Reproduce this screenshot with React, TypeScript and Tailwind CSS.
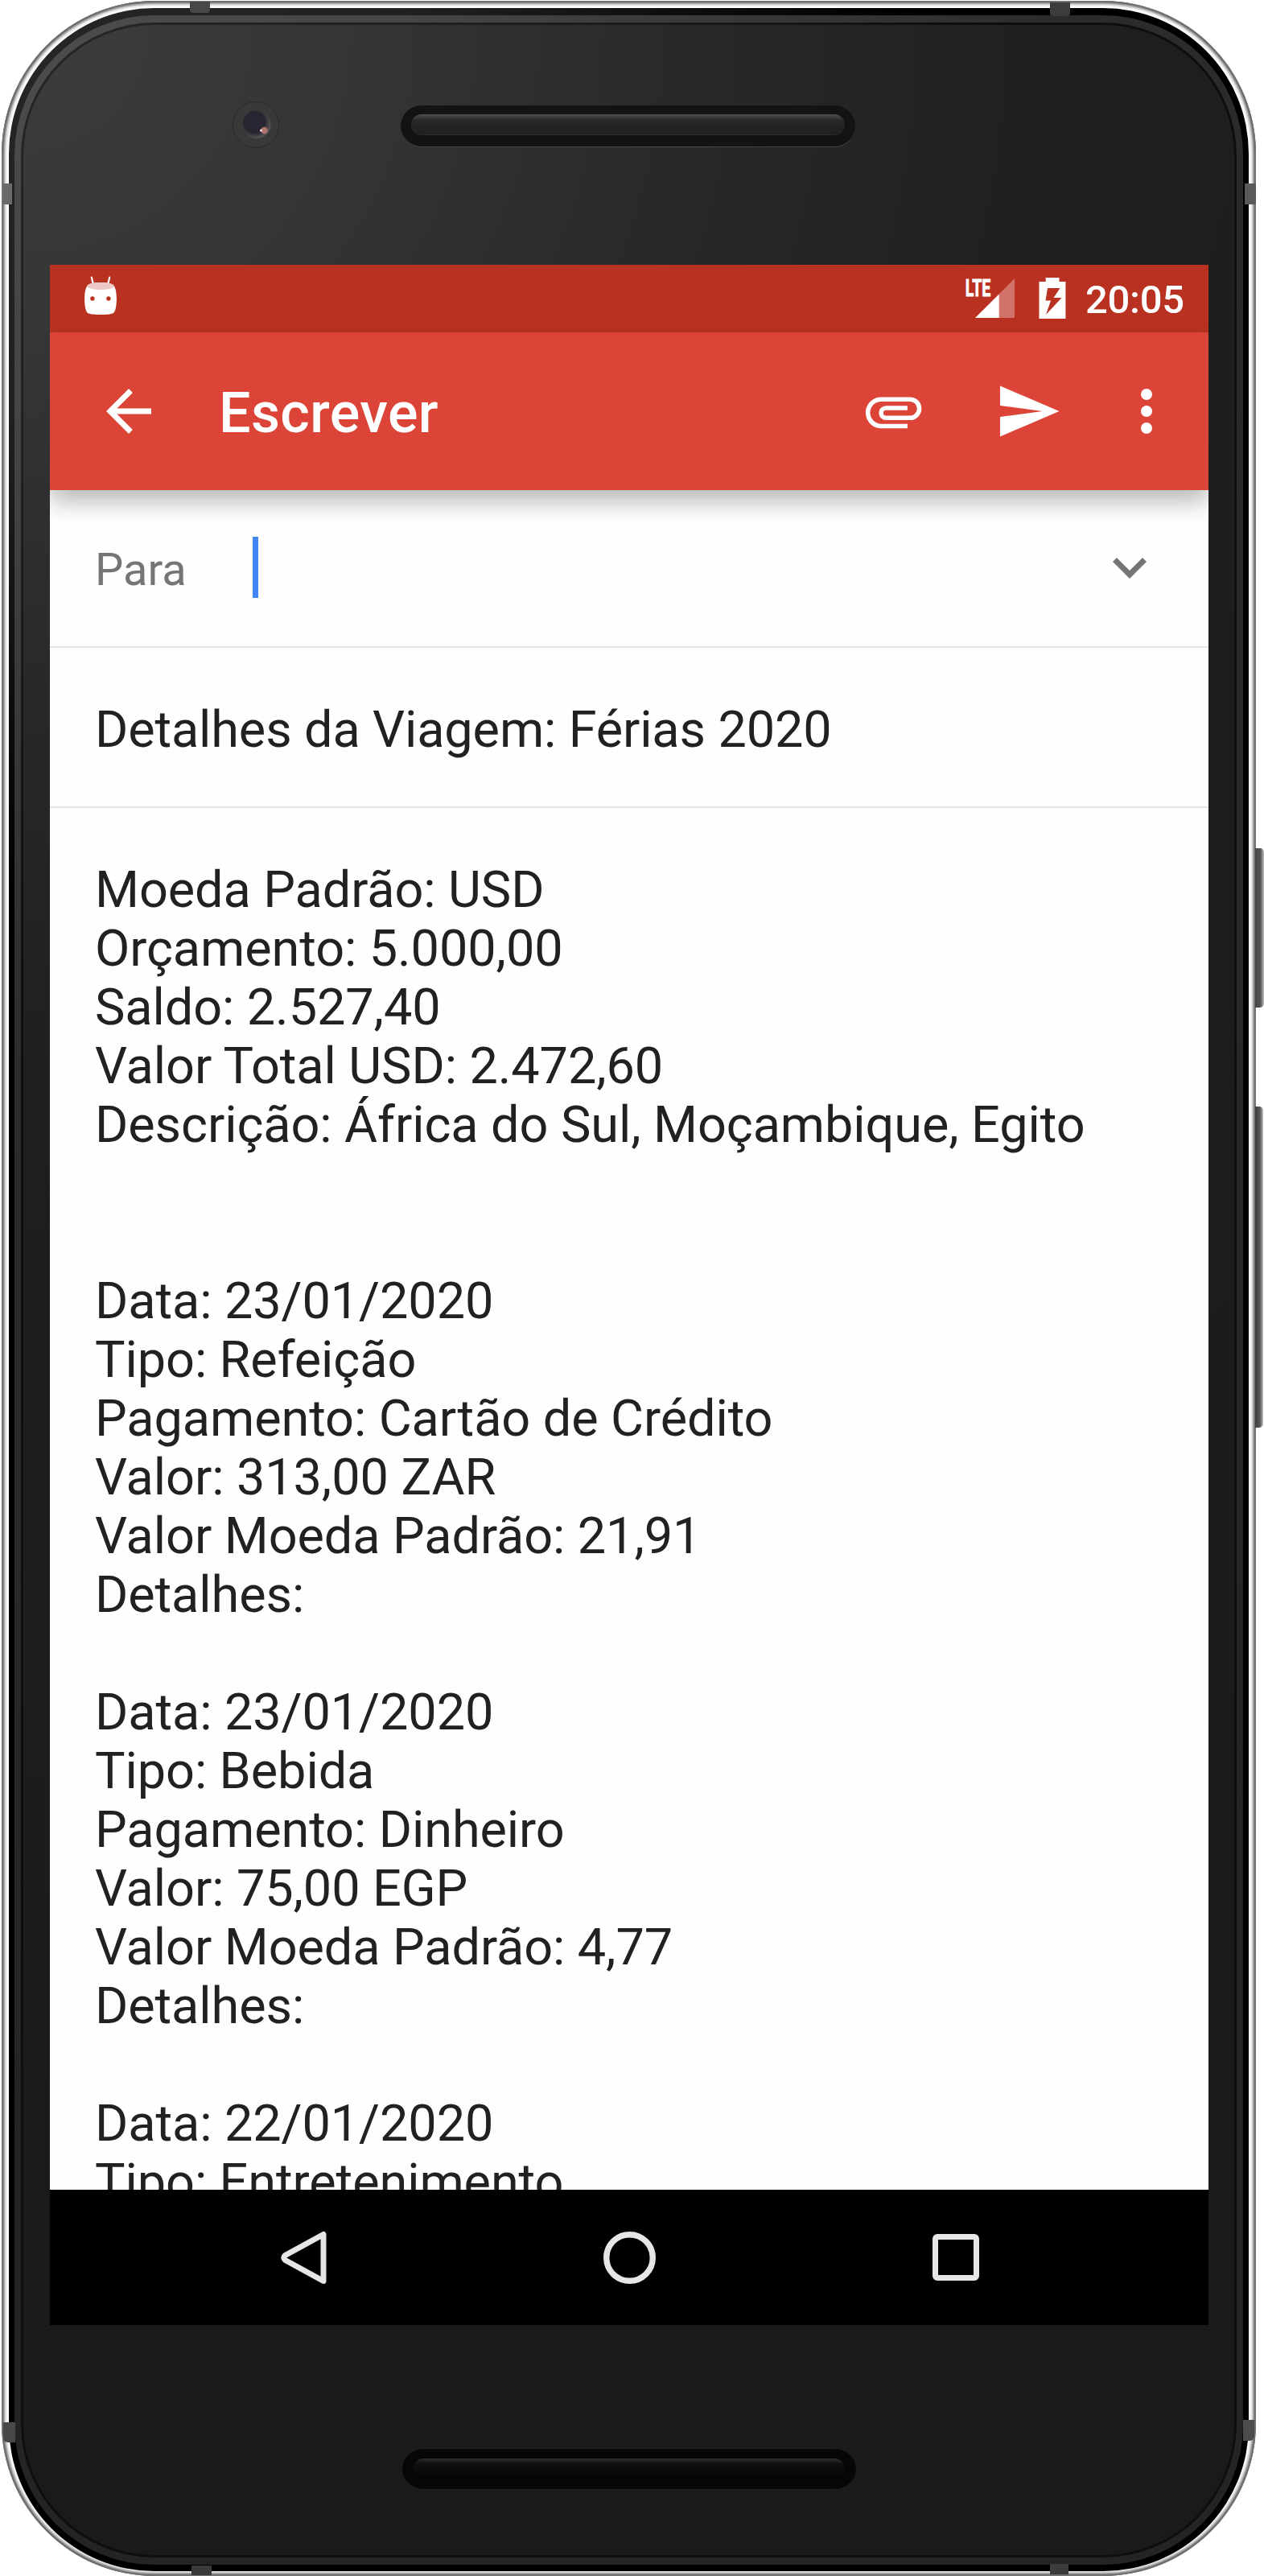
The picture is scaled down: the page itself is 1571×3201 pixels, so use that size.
import React from "react";

const bodyLines = [
  "Moeda Padrão: USD",
  "Orçamento: 5.000,00",
  "Saldo: 2.527,40",
  "Valor Total USD: 2.472,60",
  "Descrição: África do Sul, Moçambique, Egito",
  "",
  "",
  "Data: 23/01/2020",
  "Tipo: Refeição",
  "Pagamento: Cartão de Crédito",
  "Valor: 313,00 ZAR",
  "Valor Moeda Padrão: 21,91",
  "Detalhes:",
  "",
  "Data: 23/01/2020",
  "Tipo: Bebida",
  "Pagamento: Dinheiro",
  "Valor: 75,00 EGP",
  "Valor Moeda Padrão: 4,77",
  "Detalhes:",
  "",
  "Data: 22/01/2020",
  "Tipo: Entretenimento",
];

function StatusBar() {
  return (
    <div className="flex h-[84px] shrink-0 items-start bg-[#b93221] text-white">
      <svg className="ml-[43px] mt-[14px] h-12 w-10" viewBox="0 0 40 48">
        <path d="M8.8 1.5 11 11M31.2 1.5 29 11" stroke="#fff" strokeWidth="2.2" strokeLinecap="round" />
        <path
          d="M3.2 12.5C5 6.5 35 6.5 36.8 12.5 41 18 41 40 36.5 45.5 33 49 7 49 3.5 45.5-1 40-1 18 3.2 12.5Z"
          fill="#fff"
        />
        <ellipse cx="20" cy="12.6" rx="16.6" ry="4.6" fill="#edc9c5" />
        <circle cx="9.9" cy="28" r="2.7" fill="#b93221" />
        <circle cx="29.9" cy="28" r="2.7" fill="#b93221" />
      </svg>
      <div className="ml-auto flex items-start">
        <svg className="mt-[16px] h-[52px] w-[64px] overflow-visible" viewBox="0 0 64 52">
          <path d="M62 1V50H42V21Z" fill="#d07267" />
          <path d="M42.7 20.5V50H13Z" fill="#fff" />
          <text
            x="0.8"
            y="23"
            fill="#fff"
            stroke="#fff"
            strokeWidth="0.8"
            fontFamily="Roboto"
            fontWeight="700"
            fontSize="29"
            textLength="31.5"
            lengthAdjust="spacingAndGlyphs"
          >
            LTE
          </text>
        </svg>
        <svg className="ml-[28px] mt-[16px] h-[52px] w-[34px]" viewBox="0 0 34 52">
          <path
            fill="#fff"
            fillRule="evenodd"
            d="M8.7 0H25.5V5H33.4V51H.5V5H8.7ZM11 13 8.5 28.5H15L9 46 28.5 25H18.5L26.5 13Z"
          />
        </svg>
        <div className="ml-6 mr-[27px] mt-[15px] w-[126px] whitespace-nowrap text-[49px] font-medium leading-[57px] tracking-[-0.3px]">
          20:05
        </div>
      </div>
    </div>
  );
}

function AppBar() {
  return (
    <div className="relative z-10 flex h-[196px] shrink-0 items-center bg-[#db4437] pl-[56px] pr-[35px] text-white shadow-[0_14px_28px_rgba(0,0,0,0.28)]">
      <svg className="size-[84px]" viewBox="0 0 24 24" fill="currentColor">
        <path d="M20 11H7.83l5.59-5.59L12 4l-8 8 8 8 1.41-1.41L7.83 13H20v-2z" />
      </svg>
      <h1 className="ml-[70px] mt-1 text-[70px] font-medium leading-[82px] tracking-[0.4px]">Escrever</h1>
      <svg className="ml-auto size-[84px]" viewBox="0 0 24 24" fill="none" stroke="currentColor" strokeWidth="1.6">
        <path d="M17.1 17.27H7.5A4.76 4.76 0 0 1 7.5 7.77H18a3.25 3.25 0 0 1 0 6.6H9.5a1.75 1.75 0 0 1 0-3.5H17.1" />
      </svg>
      <svg className="ml-[84px] size-[84px]" viewBox="0 0 24 24" fill="currentColor">
        <path d="M2 21 23 12 2 3v7l15 2-15 2z" />
      </svg>
      <svg className="ml-[63px] size-[84px]" viewBox="0 0 24 24" fill="currentColor">
        <circle cx="12" cy="6" r="2" />
        <circle cx="12" cy="12" r="2" />
        <circle cx="12" cy="18" r="2" />
      </svg>
    </div>
  );
}

function NavBar() {
  return (
    <div className="flex h-[168px] shrink-0 items-center bg-black pl-[277px]">
      <svg className="size-[80px]" viewBox="0 0 80 80" fill="none" stroke="#e6e6e6" strokeWidth="7" strokeLinejoin="round">
        <path d="M63 11.5V69.5L15.5 43.5Q12 40.5 15.5 37.5Z" />
      </svg>
      <svg className="ml-[330px] size-[66px]" viewBox="0 0 66 66" fill="none" stroke="#e6e6e6" strokeWidth="7.4">
        <circle cx="33.5" cy="33.5" r="28.8" />
      </svg>
      <div className="ml-[344px] size-[58px] rounded-[6px] border-[7px] border-[#e6e6e6]" />
    </div>
  );
}

function Screen() {
  return (
    <div className="flex h-[2560px] w-[1440px] flex-col overflow-hidden bg-[#fefefe] text-[#212121]">
      <StatusBar />
      <AppBar />
      <div className="flex h-[196px] shrink-0 items-start border-b-2 border-[#e5e5e5] px-[56px]">
        <label className="mt-[66px] w-[196px] text-[56px] leading-[66px] text-[#757575]">Para</label>
        <div className="mt-[58px] h-[76px] w-[7px] bg-[#4285f4]" />
        <svg className="ml-auto mt-[54px] size-[84px]" viewBox="0 0 24 24" fill="#757575">
          <path d="M16.59 8.59 12 13.17 7.41 8.59 6 10l6 6 6-6z" />
        </svg>
      </div>
      <div className="h-[199px] shrink-0 border-b-2 border-[#e5e5e5] px-[56px] pt-[65px] text-[63px] leading-[73px] tracking-[-0.13px]">
        Detalhes da Viagem: Férias 2020
      </div>
      <div className="min-h-0 flex-1 overflow-hidden whitespace-pre px-[56px] pt-[65px] text-[63px] leading-[73px] tracking-[-0.08px]">
        {bodyLines.map((line, i) => (
          <p key={i} className="h-[73px]">
            {line}
          </p>
        ))}
      </div>
      <NavBar />
    </div>
  );
}

const bands = [
  "left-[236px] top-[2px] w-[25px] h-[14px] rounded-b bg-[#474747]",
  "left-[1305px] top-[3px] w-[25px] h-[17px] rounded-b bg-[#3c3c3c]",
  "left-[3px] top-[228px] w-[12px] h-[26px] bg-[#6a6a6a]",
  "left-[1547px] top-[228px] w-[14px] h-[26px] bg-[#5a5a5a]",
  "left-[238px] top-[3188px] w-[25px] h-[12px] bg-[#3a3a3a]",
  "left-[1305px] top-[3186px] w-[23px] h-[13px] bg-[#3c3c3c]",
  "left-[4px] top-[3010px] w-[15px] h-[25px] bg-[#484848] rounded-bl-md",
  "left-[1545px] top-[3007px] w-[14px] h-[26px] bg-[#4c4c4c] rounded-br-md",
];

export default function App() {
  return (
    <div className="relative h-[3201px] w-[1571px] overflow-hidden bg-white font-[Roboto,sans-serif]">
      <div className="absolute left-[1560px] top-[1054px] h-[198px] w-[11px] rounded-r-[5px] bg-linear-to-r from-[#444] via-[#555] via-60% to-[#c4c4c4]" />
      <div className="absolute left-[1560px] top-[1375px] h-[399px] w-[10px] rounded-r-[5px] bg-linear-to-r from-[#3c3c3c] via-[#585858] via-60% to-[#c4c4c4]" />

      <div className="ml-[2px] mt-px flex h-[3200px] w-[1559px] flex-col rounded-[190px] bg-white px-[9px] pb-[6px] pt-[9px] shadow-[inset_0_0_0_1px_#777,inset_0_0_4px_3px_#3c3c3c]">
        <div className="flex-1 rounded-[181px] bg-[radial-gradient(circle_at_0_0,#262626_0,#202020_500px,#000_1100px)] px-[7px] pb-[8px] pt-[9px]">
          <div className="h-full rounded-[174px] bg-[radial-gradient(circle_at_0_0,#4c4c4c_0,#454545_500px,#2c2c2c_1300px,#242424_2800px)] px-[8px] py-[9px]">
            <div className="h-full rounded-[166px] bg-[radial-gradient(circle_at_0_0,#262626_0,#202020_500px,#0e0e0e_1200px)] p-[3px]">
              <div className="flex h-full flex-col rounded-[163px] bg-[radial-gradient(circle_at_0_0,#3c3c3c_0,#353535_400px,#282828_850px,#1f1f1f_1300px,#1a1a1a_2800px)]">
                <div className="flex h-[298px] shrink-0 items-start">
                  <svg className="ml-[260px] mt-[93px] size-[60px]" viewBox="0 0 60 60">
                    <defs>
                      <radialGradient id="lens" cx=".42" cy=".42" r=".62">
                        <stop offset="0" stopColor="#2b2838" />
                        <stop offset=".6" stopColor="#28242f" />
                        <stop offset="1" stopColor="#5e5a5c" />
                      </radialGradient>
                    </defs>
                    <circle cx="29" cy="31" r="28.5" fill="#393939" stroke="#292929" strokeWidth="1" />
                    <circle cx="30" cy="30.5" r="17.5" fill="url(#lens)" />
                    <circle cx="39.5" cy="38" r="4.2" fill="#b0746c" />
                    <circle cx="35.5" cy="38" r="1.6" fill="#f3dfe6" />
                  </svg>
                  <div className="ml-[149px] mt-[100px] h-[52px] w-[565px] rounded-full border-b border-[#484848] bg-[#131313] px-[13px] pt-[11px]">
                    <div className="h-[26px] rounded-full border-b border-[#2b2b2b] bg-linear-to-b from-[#505050] via-[#282828] via-30% to-[#202020]" />
                  </div>
                </div>
                <div className="ml-[33px]">
                  <Screen />
                </div>
                <div className="ml-[471px] mt-[153px] h-[52px] w-[564px] rounded-full border-y border-[#242424] bg-[#060606] px-[14px] pt-[12px]">
                  <div className="h-[25px] rounded-full bg-linear-to-b from-[#2e2e2e] via-[#101010] via-25% to-[#060606]" />
                </div>
              </div>
            </div>
          </div>
        </div>
      </div>

      {bands.map((band) => (
        <div key={band} className={`absolute ${band}`} />
      ))}
    </div>
  );
}
